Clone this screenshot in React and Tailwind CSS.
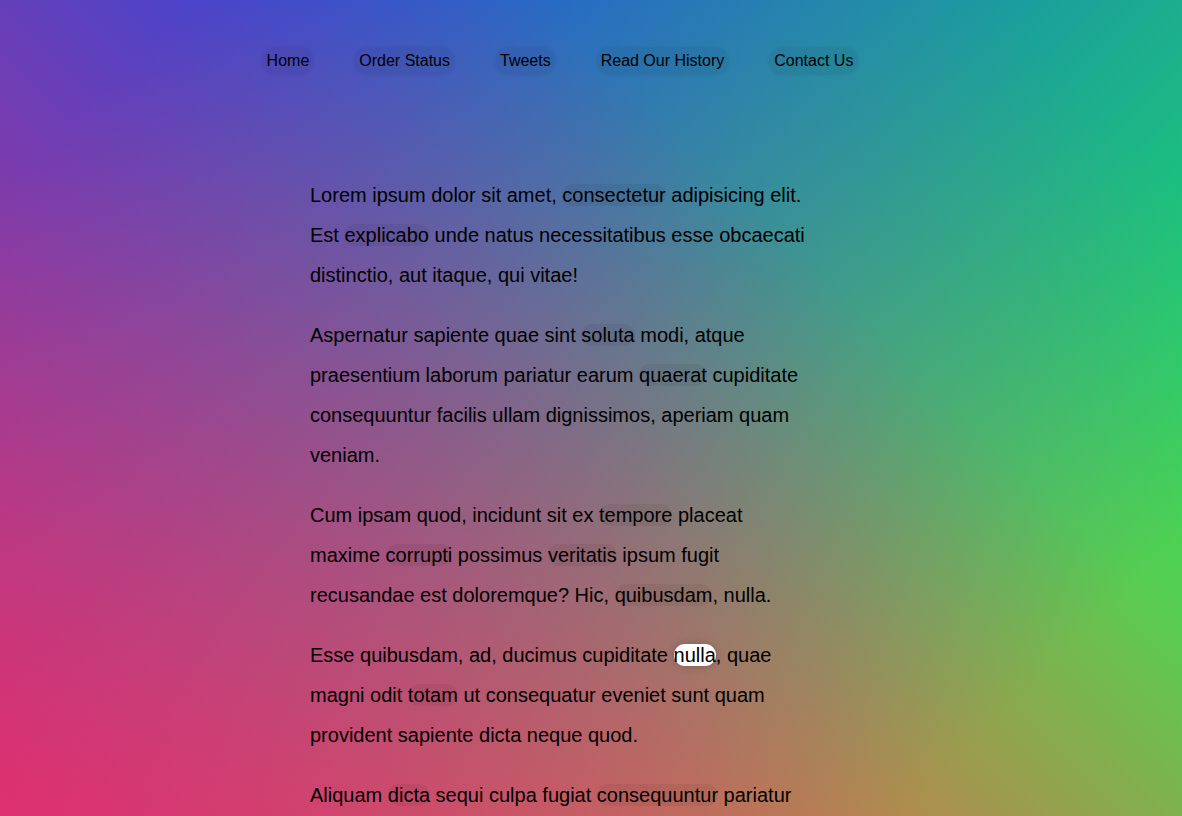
import React from "react";

const L = ({ children, hl }) => (
  <a
    href="#"
    className={
      hl
        ? "rounded-[20px] bg-white text-black shadow-[0_0_10px_rgba(0,0,0,0.2)]"
        : "rounded-[20px] bg-black/5 text-black"
    }
  >
    {children}
  </a>
);

export default function App() {
  const nav = ["Home", "Order Status", "Tweets", "Read Our History", "Contact Us"];
  return (
    <div className="h-[816px] w-full overflow-hidden bg-no-repeat bg-[length:100%_1000px] bg-[position:0_-27px] bg-[linear-gradient(rgba(128,128,128,0.15),rgba(128,128,128,0.15)),linear-gradient(45deg,hsla(340,100%,55%,1)_0%,hsla(340,100%,55%,0)_70%),linear-gradient(135deg,hsla(225,95%,50%,1)_10%,hsla(225,95%,50%,0)_80%),linear-gradient(225deg,hsla(140,90%,50%,1)_10%,hsla(140,90%,50%,0)_80%),linear-gradient(315deg,hsla(35,95%,55%,1)_100%,hsla(35,95%,55%,0)_70%)] font-['Liberation_Sans',Arial,sans-serif] text-black">
      <div className="w-[1120px]">
        <ul className="flex justify-center pt-[47px]">
          {nav.map((n) => (
            <li key={n}>
              <a
                href="#"
                className="mx-5 inline-block rounded-[20px] bg-black/5 p-[5px] text-[16px] leading-[18px] text-black shadow-[0_0_4px_rgba(0,0,0,0.05)]"
              >
                {n}
              </a>
            </li>
          ))}
        </ul>
        <div className="mx-auto mt-[100px] flex w-[500px] flex-col gap-5 text-[20px] leading-[40px]">
          <p>
            Lorem ipsum dolor sit amet, <L>consectetur</L> adipisicing elit. Est{" "}
            <L>explicabo</L> unde natus necessitatibus esse obcaecati distinctio, aut
            itaque, qui vitae!
          </p>
          <p>
            Aspernatur sapiente quae sint <L>soluta</L> modi, atque praesentium laborum
            pariatur earum <L>quaerat</L> cupiditate consequuntur facilis ullam
            dignissimos, aperiam quam veniam.
          </p>
          <p>
            Cum ipsam quod, incidunt sit ex <L>tempore</L> placeat maxime{" "}
            <L>corrupti</L> possimus <L>veritatis</L> ipsum fugit recusandae est
            doloremque? Hic, <L>quibusdam</L>, nulla.
          </p>
          <p>
            Esse quibusdam, ad, ducimus cupiditate <L hl>nulla</L>, quae magni odit{" "}
            <L>totam</L> ut consequatur eveniet sunt quam provident sapiente dicta neque
            quod.
          </p>
          <p>
            Aliquam <L>dicta</L> sequi culpa fugiat <L>consequuntur</L> pariatur optio
            ad minima, maxime odio, distinctio magni impedit tempore enim repellendus
            repudiandae quas!
          </p>
        </div>
      </div>
    </div>
  );
}
